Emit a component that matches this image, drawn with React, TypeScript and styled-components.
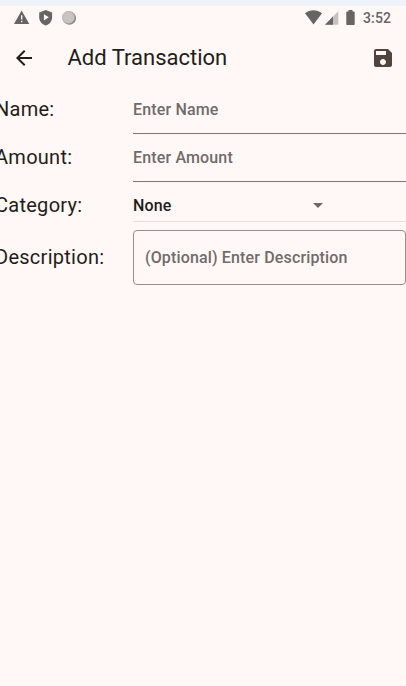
import React from "react";
import styled, { createGlobalStyle } from "styled-components";

const GlobalStyle = createGlobalStyle`
  * { box-sizing: border-box; }
  body { margin: 0; background: #fff8f6; overflow: hidden; font-family: Roboto, sans-serif; }
  svg { display: block; }
`;

const Screen = styled.main`
  display: flex;
  flex-direction: column;
  width: 406px;
  height: 686px;
  overflow: hidden;
  background: #fff8f6;
  border-top: 6px solid #eef2fa;
  color: #231d1a;
`;

const StatusBar = styled.header`
  display: flex;
  justify-content: space-between;
  align-items: center;
  flex: none;
  height: 24px;
  padding: 0 15px 0 14px;
  color: #686463;
`;

const StatusGroup = styled.div<{ $gap: number }>`
  display: flex;
  align-items: center;
  gap: ${(p) => p.$gap}px;
`;

const Clock = styled.time`
  margin-left: 4px;
  font-size: 14px;
  line-height: 24px;
  font-weight: 500;
  letter-spacing: 0.1px;
`;

const AppBar = styled.div`
  display: flex;
  align-items: center;
  flex: none;
  height: 56px;
  padding: 0 11.5px 1px 12px;
`;

const IconButton = styled.button<{ $color: string }>`
  display: flex;
  flex: none;
  padding: 0;
  border: 0;
  background: none;
  color: ${(p) => p.$color};
`;

const Title = styled.h1`
  flex: 1;
  margin: 0 0 0 31.5px;
  font-size: 22px;
  line-height: 28px;
  font-weight: 400;
  letter-spacing: 0;
`;

const Form = styled.form`
  display: flex;
  flex-direction: column;
`;

const Row = styled.div<{ $height: number }>`
  display: grid;
  grid-template-columns: 138px 273px;
  align-items: center;
  height: ${(p) => p.$height}px;
  margin-left: -5px;
`;

const Label = styled.label`
  padding-bottom: 2px;
  font-size: 20px;
  line-height: 24px;
  letter-spacing: 0.27px;
  white-space: nowrap;
`;

const fieldText = `
  font-family: Roboto, sans-serif;
  font-size: 16px;
  font-weight: 500;
  letter-spacing: 0.15px;
`;

const Input = styled.input<{ $outlined?: boolean }>`
  ${fieldText}
  width: 100%;
  height: ${(p) => (p.$outlined ? 55 : 48)}px;
  padding: ${(p) => (p.$outlined ? "0 11px 1px" : "0")};
  border: 0 solid ${(p) => (p.$outlined ? "#9a8c87" : "#85736e")};
  border-width: ${(p) => (p.$outlined ? "1px" : "0 0 1px")};
  border-radius: ${(p) => (p.$outlined ? "4px" : "0")};
  background: transparent;
  color: #231d1a;
  outline: none;
  &::placeholder { color: #716b69; opacity: 1; }
`;

const Select = styled.div`
  ${fieldText}
  display: flex;
  align-items: center;
  align-self: start;
  height: 40px;
  padding: 8px 0 1px;
  border-bottom: 1px solid #e9e0dd;
`;

const SelectValue = styled.span`
  width: 173px;
`;

export default function App() {
  return (
    <>
      <GlobalStyle />
      <Screen>
        <StatusBar>
          <StatusGroup $gap={9}>
            <svg width="16" height="16" viewBox="0 0 16 16">
              <path d="M7.6 .4 15.3 14H0Z" fill="currentColor" />
              <path d="M7.7 5.2v4.2M7.7 10.8v1.5" stroke="#fff8f6" strokeWidth="1.3" />
            </svg>
            <svg width="14" height="16" viewBox="0 0 14 16">
              <path d="M6.7 0 13.1 2.4V7.3C13.1 11.3 10.5 14.3 6.7 15.5 2.9 14.3.2 11.3.2 7.3V2.4Z" fill="currentColor" />
              <path d="m4.9 4.2 5 3.1-5 3.2Z" fill="#fff8f6" />
            </svg>
            <svg width="15" height="15" viewBox="0 0 15 15">
              <circle cx="7.4" cy="7.2" r="6.6" fill="#8b8785" />
              <circle cx="6.5" cy="6.4" r="6.1" fill="#c9c4c1" stroke="#aaa6a3" strokeWidth=".6" />
            </svg>
          </StatusGroup>
          <StatusGroup $gap={3}>
            <svg width="17" height="16" viewBox="0 0 17 16">
              <path d="M0 3.2C5-.8 12-.8 17 3.2L8.5 14.4Z" fill="currentColor" />
            </svg>
            <svg width="14" height="16" viewBox="0 0 14 16">
              <path d="M13.3 1.3v13.5H0Z" fill="currentColor" opacity=".38" />
              <path d="M8 6.6v8.2H0Z" fill="currentColor" />
            </svg>
            <svg width="14" height="16" viewBox="0 0 14 16">
              <path d="M6.5 1.6V0h4V1.6H12c.4 0 .7.3.7.6v12c0 .4-.3.7-.7.7H5c-.4 0-.7-.3-.7-.7v-12c0-.3.3-.6.7-.6Z" fill="currentColor" />
            </svg>
            <Clock>3:52</Clock>
          </StatusGroup>
        </StatusBar>
        <AppBar>
          <IconButton $color="#231d1a" aria-label="Back">
            <svg width="24" height="24" viewBox="0 0 24 24">
              <path d="M20 11H7.83l5.59-5.59L12 4l-8 8 8 8 1.41-1.41L7.83 13H20z" fill="currentColor" />
            </svg>
          </IconButton>
          <Title>Add Transaction</Title>
          <IconButton $color="#53433f" aria-label="Save">
            <svg width="24" height="24" viewBox="0 0 24 24">
              <path d="M17 3H5a2 2 0 0 0-2 2v14c0 1.1.89 2 2 2h14c1.1 0 2-.9 2-2V7zm-5 16c-1.66 0-3-1.34-3-3s1.34-3 3-3 3 1.34 3 3-1.34 3-3 3m3-10H5V5h10z" fill="currentColor" />
            </svg>
          </IconButton>
        </AppBar>
        <Form>
          <Row $height={48}>
            <Label htmlFor="name">Name:</Label>
            <Input id="name" placeholder="Enter Name" />
          </Row>
          <Row $height={48}>
            <Label htmlFor="amount">Amount:</Label>
            <Input id="amount" placeholder="Enter Amount" />
          </Row>
          <Row $height={48}>
            <Label>Category:</Label>
            <Select>
              <SelectValue>None</SelectValue>
              <svg width="24" height="24" viewBox="0 0 24 24">
                <path d="m7 10 5 5 5-5z" fill="#6d6765" />
              </svg>
            </Select>
          </Row>
          <Row $height={55}>
            <Label htmlFor="description">Description:</Label>
            <Input id="description" $outlined placeholder="(Optional) Enter Description" />
          </Row>
        </Form>
      </Screen>
    </>
  );
}
